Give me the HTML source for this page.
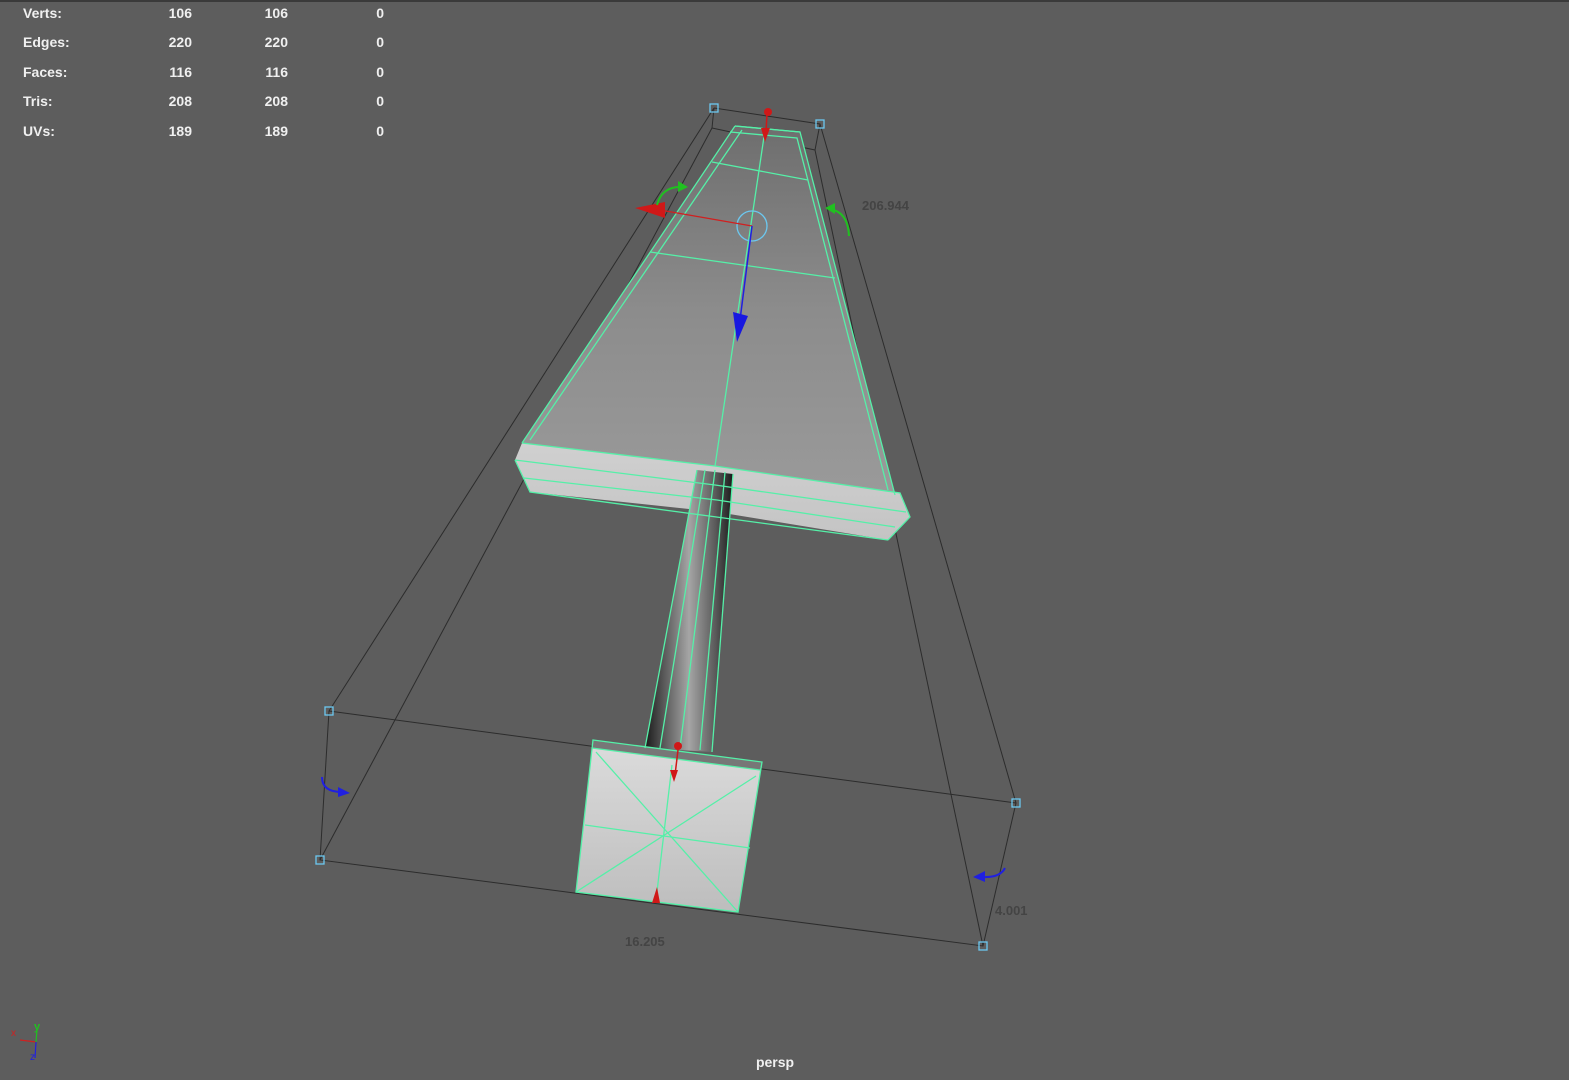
<!DOCTYPE html>
<html><head><meta charset="utf-8"><style>
html,body{margin:0;padding:0;background:#5d5d5d;width:1569px;height:1080px;overflow:hidden}
svg{position:absolute;left:0;top:0}
.st{font-family:"Liberation Sans",sans-serif;font-weight:bold;font-size:14px;fill:#f0f0f0}
.dim{font-family:"Liberation Sans",sans-serif;font-weight:bold;font-size:13px;fill:#444}
</style></head><body>
<svg width="1569" height="1080" viewBox="0 0 1569 1080">
<defs>
<linearGradient id="face" x1="0" y1="0" x2="0" y2="1">
<stop offset="0" stop-color="#6e6e6e"/><stop offset="0.5" stop-color="#8c8c8c"/><stop offset="1" stop-color="#9a9a9a"/></linearGradient>
<linearGradient id="band" x1="0" y1="0" x2="0" y2="1">
<stop offset="0" stop-color="#d0d0d0"/><stop offset="1" stop-color="#c4c4c4"/></linearGradient>
<linearGradient id="hand" x1="0" y1="0" x2="1" y2="0">
<stop offset="0" stop-color="#1a1a1a"/><stop offset="0.2" stop-color="#555"/><stop offset="0.5" stop-color="#a5a5a5"/><stop offset="0.8" stop-color="#5a5a5a"/><stop offset="1" stop-color="#1a1a1a"/></linearGradient>
<linearGradient id="pom" x1="0" y1="0" x2="0" y2="1">
<stop offset="0" stop-color="#dcdcdc"/><stop offset="1" stop-color="#bdbdbd"/></linearGradient>
</defs>
<rect x="0" y="0" width="1569" height="2" fill="#3a3a3a"/>
<!-- stats -->
<g class="st">
<text x="23" y="18">Verts:</text><text x="23" y="47">Edges:</text><text x="23" y="77">Faces:</text><text x="23" y="106">Tris:</text><text x="23" y="136">UVs:</text>
<g text-anchor="end">
<text x="192" y="18">106</text><text x="288" y="18">106</text><text x="384" y="18">0</text>
<text x="192" y="47">220</text><text x="288" y="47">220</text><text x="384" y="47">0</text>
<text x="192" y="77">116</text><text x="288" y="77">116</text><text x="384" y="77">0</text>
<text x="192" y="106">208</text><text x="288" y="106">208</text><text x="384" y="106">0</text>
<text x="192" y="136">189</text><text x="288" y="136">189</text><text x="384" y="136">0</text>
</g></g>
<!-- bounding box back lines -->
<g stroke="#2c2c2c" stroke-width="1" fill="none">
<polyline points="714,108 820,124 1016,803 983,946 320,860 329,711 714,108"/>
<line x1="329" y1="711" x2="1016" y2="803"/>
<line x1="714" y1="108" x2="712" y2="128"/><line x1="712" y1="128" x2="320" y2="860"/>
<line x1="712" y1="128" x2="815" y2="150"/><line x1="815" y1="150" x2="820" y2="124"/>
<line x1="815" y1="150" x2="983" y2="946"/>
</g>
<!-- blade face -->
<polygon points="735,126 800,132 895,495 715,466 522,443" fill="url(#face)"/>
<!-- bevel band -->
<polygon points="522,443 715,466 900,493 910,517 888,540 717,512 530,492 515,460" fill="url(#band)"/>
<!-- handle -->
<polygon points="697,470 733,474 712,752 645,748" fill="url(#hand)"/>
<!-- pommel -->
<polygon points="593,740 762,762 738,912 576,892" fill="url(#pom)"/>
<polygon points="593,740 762,762 760,770 592,748" fill="#777"/>
<g stroke="#55f0a8" stroke-width="1.3" fill="none">
<polyline points="735,126 800,132 895,495"/>
<polyline points="730,132 797,138 888,490"/>
<polyline points="735,126 522,443"/>
<polyline points="742,130 530,440"/>
<line x1="735" y1="126" x2="800" y2="132"/>
<line x1="712" y1="162" x2="808" y2="180"/>
<line x1="650" y1="252" x2="835" y2="278"/>
<line x1="765" y1="130" x2="715" y2="466"/>
<polyline points="522,443 715,466 900,493 910,517 888,540"/>
<polyline points="515,460 715,485 906,512"/>
<polyline points="524,478 717,500 895,527"/>
<polyline points="515,460 530,492 888,540"/>
<line x1="697" y1="470" x2="645" y2="748"/><line x1="733" y1="474" x2="712" y2="752"/>
<line x1="715" y1="470" x2="680" y2="748"/><line x1="705" y1="470" x2="660" y2="748"/>
<line x1="725" y1="472" x2="700" y2="750"/>
<polygon points="593,740 762,762 738,912 576,892"/>
<line x1="592" y1="748" x2="760" y2="770"/>
<line x1="596" y1="752" x2="738" y2="912"/><line x1="756" y1="776" x2="576" y2="892"/>
<line x1="672" y1="765" x2="656" y2="900"/><line x1="585" y1="825" x2="750" y2="848"/>
</g>
<!-- bbox corners -->
<g fill="none" stroke="#6cc8f0" stroke-width="1.3">
<rect x="710" y="104" width="8" height="8"/><rect x="816" y="120" width="8" height="8"/>
<rect x="325" y="707" width="8" height="8"/><rect x="1012" y="799" width="8" height="8"/>
<rect x="979" y="942" width="8" height="8"/><rect x="316" y="856" width="8" height="8"/>
<circle cx="752" cy="226" r="15"/>
</g>
<!-- manipulators -->
<line x1="660" y1="210" x2="752" y2="226" stroke="#d02020" stroke-width="1.3"/>
<polygon points="635,208 665,202 665,218" fill="#d01818"/>
<line x1="752" y1="226" x2="740" y2="320" stroke="#2020e0" stroke-width="1.5"/>
<polygon points="733,312 748,316 737,342" fill="#1818e0"/>
<circle cx="768" cy="112" r="4" fill="#d01818"/>
<line x1="767" y1="114" x2="766" y2="132" stroke="#d01818" stroke-width="1.5"/>
<polygon points="761,128 770,128 765,142" fill="#d01818"/>
<path d="M657,205 Q662,186 682,187" stroke="#20c020" stroke-width="2" fill="none"/>
<polygon points="678,181 688,187 678,192" fill="#20c020"/>
<path d="M830,209 Q848,212 849,236" stroke="#20c020" stroke-width="2" fill="none"/>
<polygon points="825,208 835,203 835,214" fill="#20c020"/>
<circle cx="678" cy="746" r="4" fill="#d01818"/>
<line x1="678" y1="750" x2="675" y2="775" stroke="#d01818" stroke-width="1.5"/>
<polygon points="670,770 678,770 674,782" fill="#d01818"/>
<polygon points="652,903 660,903 657,887" fill="#d01818"/>
<path d="M322,777 Q322,792 342,792" stroke="#2020e0" stroke-width="2" fill="none"/>
<polygon points="338,787 350,793 338,797" fill="#2020e0"/>
<path d="M1005,868 Q1000,878 982,877" stroke="#2020e0" stroke-width="2" fill="none"/>
<polygon points="985,871 973,877 985,882" fill="#2020e0"/>
<!-- dims -->
<text class="dim" x="862" y="210">206.944</text>
<text class="dim" x="625" y="946">16.205</text>
<text class="dim" x="995" y="915">4.001</text>
<!-- axis -->
<line x1="20" y1="1040" x2="36" y2="1042" stroke="#d02020" stroke-width="1.2"/>
<line x1="36" y1="1042" x2="37" y2="1030" stroke="#20c020" stroke-width="1.2"/>
<line x1="36" y1="1042" x2="35" y2="1058" stroke="#2020e0" stroke-width="1.2"/>
<text x="11" y="1036" font-family="Liberation Sans" font-size="10" fill="#d02020">x</text>
<text x="34" y="1030" font-family="Liberation Sans" font-size="11" font-weight="bold" fill="#20c020">y</text>
<text x="30" y="1060" font-family="Liberation Sans" font-size="10" fill="#2020e0">z</text>
<text x="775" y="1067" text-anchor="middle" class="st">persp</text>
</svg>
</body></html>
